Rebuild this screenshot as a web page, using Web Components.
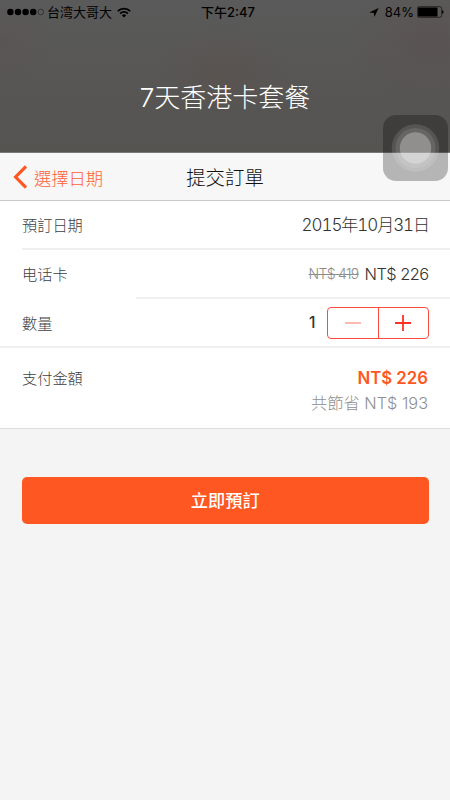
<!DOCTYPE html>
<html lang="zh-Hant">
<head>
<meta charset="utf-8">
<title>提交訂單</title>
<style>
html,body{margin:0;height:100%;background:#f4f4f4}
body{font-family:Inter,"Noto Sans CJK TC",sans-serif;font-weight:300;color:#404040;overflow:hidden}
</style>
</head>
<body>
<order-screen></order-screen>
<script>
const define = (name, html) => customElements.define(name, class extends HTMLElement {
  constructor() {
    super();
    const t = document.createElement('template');
    t.innerHTML = html;
    this.attachShadow({mode: 'open'}).append(t.content.cloneNode(true));
  }
});

define('status-bar', `<style>
:host{display:grid;grid-template-columns:1fr auto 1fr;align-items:center;height:24px;padding:0 6px 0 7px;color:#000;font-size:13px;font-weight:400;line-height:24px}
div{display:flex;align-items:center}
svg{display:block;flex:none}
.carrier{font:400 13px/22px "Noto Sans CJK SC",sans-serif;margin:0 5px 1px 3px}
.time{font-weight:500;padding-left:5px}
.right{justify-content:flex-end}
.pct{margin:0 3px 0 6px}
</style>
<div><svg width="37" height="8" viewBox="0 0 37 8"><circle cx="3.4" cy="4" r="3.2"/><circle cx="11" cy="4" r="3.2"/><circle cx="18.6" cy="4" r="3.2"/><circle cx="26.2" cy="4" r="3.2"/><circle cx="33.8" cy="4" r="2.8" fill="none" stroke="#1c1c1c" stroke-width=".6"/></svg><span class="carrier">台湾大哥大</span><svg width="14" height="11" viewBox="0 0 14 11" fill="none" stroke="#000" stroke-width="1.8"><path d="M.8 4.1a8.8 8.8 0 0 1 12.4 0M3.1 6.5a5.5 5.5 0 0 1 7.8 0"/><path d="M7 10.6 4.9 8.4a3 3 0 0 1 4.2 0z" fill="#000" stroke="none"/></svg></div>
<div class="time">下午2:47</div>
<div class="right"><svg width="10" height="9" viewBox="0 0 10 9"><path d="M9.6 0 5.4 9 4.9 5 .2 4.4z"/></svg><span class="pct">84%</span><svg width="27" height="12" viewBox="0 0 27 12"><rect x=".4" y=".7" width="24.2" height="10.6" rx="1.6" fill="none" stroke="#111" stroke-width=".7"/><rect x="1.1" y="1.4" width="19.4" height="9.2" rx=".6"/><path d="M25.2 4q1.4.4 1.4 2t-1.4 2z"/></svg></div>`);

define('package-header', `<style>
:host{display:flex;flex-direction:column;border-bottom:1px solid #797876;box-sizing:border-box;height:153px;
background:radial-gradient(ellipse 65px 45px at 222px 72px,#5c514d99,#5c514d00),radial-gradient(ellipse 80px 60px at 430px 42px,#5a525099 20%,#5a525000),radial-gradient(ellipse 55px 40px at 0 42px,#5b535199,#5b535100),linear-gradient(#5a5a5a,#565553 70%,#555451)}
h1{margin:0;padding-top:52px;text-align:center;color:#fff;font:300 26px/44px Inter,"Noto Sans CJK TC",sans-serif}
</style><slot name="status"></slot><h1><slot></slot></h1>`);

define('nav-bar', `<style>
:host{display:grid;grid-template-columns:1fr auto 1fr;align-items:center;height:48px;box-sizing:border-box;padding:0 13px;background:#f7f7f7;border-bottom:1px solid #cacaca;line-height:43px}
.back{display:flex;align-items:center;gap:7px;color:#ff6337;font-size:17.3px}
svg{display:block}
.title{color:#111;font-size:19.4px;padding-top:4px}
.back span{padding-top:4px}
</style><div class="back"><svg width="14" height="24" viewBox="0 0 14 24"><path d="M13 1.4 2.6 12 13 22.6" fill="none" stroke="#ff5722" stroke-width="3.2"/></svg><span><slot name="back"></slot></span></div><div class="title"><slot></slot></div>`);

define('order-row', `<style>
:host{display:flex;flex-direction:column;background:#fff}
.row{display:flex;justify-content:space-between;align-items:center;height:47px;padding:0 22px;line-height:24px}
.label{font-size:15.2px;margin-top:3px}
.value{display:flex;align-items:center;font-size:16.4px;color:#333;letter-spacing:-.55px;margin:1px -.5px 0 0}
.line{height:2px;background:#f0f0f0;margin-left:var(--inset,22px)}
</style><div class="row"><span class="label"><slot name="label"></slot></span><span class="value"><slot></slot></span></div><div class="line"></div>`);

define('date-value', `<style>:host{display:inline;font-size:17px;font-variant-numeric:tabular-nums;letter-spacing:-1.05px;margin-right:-.5px}</style><slot></slot>`);

define('old-price', `<style>:host{display:inline;font-size:14px;letter-spacing:-.7px;color:#8c8c8c;text-decoration:line-through;margin-right:6px}</style><slot></slot>`);

define('quantity-stepper', `<style>
:host{display:flex;align-items:center;gap:11px;height:32px;margin:0 0 1px;letter-spacing:0}
b{font-size:15.5px;font-weight:500;color:#333}
.box{display:grid;grid-template-columns:1fr 1fr;width:100px;height:30px;border:1px solid #ff4b3b;border-radius:4px}
.box span{display:flex;align-items:center;justify-content:center}
.box span+span{border-left:1px solid #ff4b3b}
svg{display:block}
</style><b><slot></slot></b><div class="box"><span><svg width="18" height="18"><path d="M1 9h16" stroke="#ff9b93" stroke-width="1.4"/></svg></span><span><svg width="18" height="18"><path d="M1 9h16M9 1v16" stroke="#ff3325" stroke-width="1.8"/></svg></span></div>`);

define('payment-total', `<style>
:host{display:flex;justify-content:space-between;background:#fff;height:80px;border-bottom:1px solid #dedede}
.label{padding:18px 0 0 22px;font-size:15.2px;line-height:26px}
.sum{padding:18px 22px 0 0;text-align:right}
.due{color:#ff5722;font-size:16.8px;font-weight:600;line-height:25px}
.saved{color:#8f8f8f;font-size:16.3px;line-height:24px}
</style><div class="label"><slot name="label"></slot></div><div class="sum"><div class="due"><slot></slot></div><div class="saved"><slot name="saved"></slot></div></div>`);

define('submit-button', `<style>
:host{display:block;margin:47.5px 21.5px 0 22px}
button{display:block;width:100%;height:47.5px;border:0;border-radius:5px;background:#ff5722;color:#fff;font:500 17.2px/47px Inter,"Noto Sans CJK TC",sans-serif;padding:0}
</style><button><slot></slot></button>`);

define('assistive-touch', `<style>
:host{display:block;position:absolute;left:383px;top:115px;width:65px;height:66px;border-radius:13px;background:rgba(0,0,0,.265)}
svg{display:block}
</style><svg width="65" height="66"><g fill="#fff"><circle cx="32.5" cy="33" r="23.8" opacity=".12"/><circle cx="32.5" cy="33" r="20" opacity=".1"/><circle cx="32.5" cy="33" r="15.7" opacity=".28"/></g></svg>`);

define('order-screen', `<style>
:host{display:flex;flex-direction:column;position:relative;width:450px;height:800px;background:#f4f4f4;overflow:hidden}
</style>
<package-header><status-bar slot="status"></status-bar>7天香港卡套餐</package-header>
<nav-bar><span slot="back">選擇日期</span>提交訂單</nav-bar>
<order-row><span slot="label">預訂日期</span><date-value>2015年10月31日</date-value></order-row>
<order-row style="--inset:136px"><span slot="label" lang="zh-Hans">电话卡</span><old-price>NT$ 419</old-price>NT$ 226</order-row>
<order-row style="--inset:0px"><span slot="label">數量</span><quantity-stepper>1</quantity-stepper></order-row>
<payment-total><span slot="label">支付金額</span>NT$ 226<span slot="saved">共節省 NT$ 193</span></payment-total>
<submit-button>立即預訂</submit-button>
<assistive-touch></assistive-touch>`);
</script>
</body>
</html>
